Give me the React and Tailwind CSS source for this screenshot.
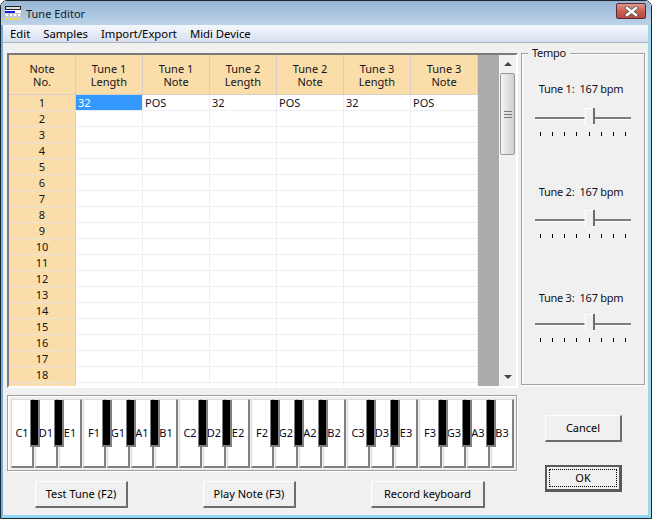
const F = { fontFamily: '"Noto Sans", Tahoma, sans-serif' };
const heads = [["Note","No."],["Tune 1","Length"],["Tune 1","Note"],["Tune 2","Length"],["Tune 2","Note"],["Tune 3","Length"],["Tune 3","Note"]];
const row1 = ["32","POS","32","POS","32","POS"];
const whites = ["C1","D1","E1","F1","G1","A1","B1","C2","D2","E2","F2","G2","A2","B2","C3","D3","E3","F3","G3","A3","B3"];
const hasBlack = [0,1,3,4,5];

function Btn({ children, className = "", def }) {
  if (def) {
    return (
      <div className={"flex items-center justify-center bg-[#f0f0f0] border-2 border-[#5a5a5a] border-r-[3px] border-b-[3px] p-[2px] text-[11px] text-black " + className}>
        <div className="w-full h-full flex items-center justify-center border border-dotted border-black">{children}</div>
      </div>
    );
  }
  return (
    <div className={"flex items-center justify-center bg-[#f0f0f0] border border-t-white border-l-white border-r-2 border-b-2 border-r-[#6e6e6e] border-b-[#6e6e6e] text-[11px] text-black " + className}>
      {children}
    </div>
  );
}

function Tempo({ label, labelClass, sliderClass }) {
  return (
    <div className="flex flex-col items-center">
      <div className={"text-[11px] leading-[14px] tracking-[-0.25px] -ml-[4px] text-[#10101c] " + labelClass}>{label}:&nbsp; 167 bpm</div>
      <div className={"relative w-[96px] h-[3px] bg-[#7c7c7c] border-b border-white " + sliderClass}>
        <svg className="absolute left-[49px] top-[-9px]" width="12" height="22" viewBox="0 0 12 22">
          <path d="M1 .5H10V16L5.5 21 1 16Z" fill="#f0f0f0" stroke="#fff" />
          <rect x="9" y="0" width="2" height="16" fill="#6e6e6e" />
        </svg>
      </div>
      <div className="flex justify-between w-[87px] mt-[12px]">
        {Array.from({ length: 8 }).map((_, i) => <div key={i} className="w-px h-[4px] bg-black" />)}
      </div>
    </div>
  );
}

export default function App() {
  return (
    <div style={F} className="w-[652px] h-[519px] bg-[#f0f0f0] flex flex-col border border-[#1c262c] rounded-t-[7px] overflow-hidden text-black box-border">
      <div className="flex-1 min-h-0 flex flex-col border-l-2 border-r-[3px] border-b-[3px] border-l-[#6fb0e0] border-r-[#9fd6ec] border-b-[#8fd4f0] bg-[#f0f0f0]">
        <div className="h-[24px] -ml-[2px] -mr-[3px] shrink-0 flex items-center justify-between pl-[4px] pr-[5px] bg-gradient-to-b from-[#97b5d4] via-[#a9c4de] to-[#bcd3e8]">
          <div className="flex items-center gap-[5px]">
            <svg width="16" height="16" viewBox="0 0 16 16">
              <rect x="0.5" y="1.5" width="15" height="3" fill="#dcdcdc" stroke="#222" />
              <rect x="0" y="5" width="16" height="3" fill="#fff" />
              <rect x="0" y="6" width="10" height="2" fill="#1a1ae0" />
              <rect x="0" y="8" width="16" height="8" fill="#c8ccd0" />
              <path d="M1 9h2v2H1zM5 9h2v2H5zM9 9h2v2H9zM13 9h2v2h-2z" fill="#fff" />
              <path d="M1 13h2v2H1zM5 13h2v2H5zM9 13h2v2H9zM13 13h2v2h-2z" fill="#f5e61e" />
            </svg>
            <span className="text-[11px] leading-none mt-[1px] text-[#10202a]">Tune Editor</span>
          </div>
          <div className="w-[30px] h-[16px] -mt-[4px] rounded-[2px] border border-[#5a2a3a] bg-gradient-to-b from-[#dc9a90] via-[#c9604f] to-[#b8483a] flex items-center justify-center">
            <svg width="15" height="11" viewBox="0 0 15 11">
              <path d="M3 2l9 7M12 2l-9 7" stroke="#555" strokeWidth="4" strokeLinecap="square" />
              <path d="M3 2l9 7M12 2l-9 7" stroke="#fff" strokeWidth="2.4" strokeLinecap="square" />
            </svg>
          </div>
        </div>
        <div className="h-[18px] shrink-0 flex items-center pl-[7px] pt-[1px] gap-[13px] text-[11.3px] leading-none bg-gradient-to-b from-[#f4f7fc] to-[#d9dff0] border-b border-b-[#b0b4c0]">
          <span>Edit</span><span>Samples</span><span>Import/Export</span><span>Midi Device</span>
        </div>
        <div className="flex mt-[10px] ml-[4px] h-[335px] shrink-0">
          <div className="w-[511px] h-[335px] shrink-0 border-2 border-t-[#7a7a7a] border-l-[#7a7a7a] border-r-white border-b-white flex overflow-hidden">
            <div className="w-[469px] shrink-0 overflow-hidden bg-white">
              <div className="flex h-[40px]">
                {heads.map((h, i) => (
                  <div key={i} className="w-[67px] shrink-0 bg-[#fadda8] border-r border-b border-r-[#d4d0c8] border-b-[#d4d0c8] flex flex-col items-center justify-center text-[11px] leading-[13px] text-[#14141c]">
                    <span>{h[0]}</span><span>{h[1]}</span>
                  </div>
                ))}
              </div>
              {Array.from({ length: 19 }).map((_, r) => (
                <div key={r} className="flex h-[16px] text-[11px] leading-[15px]">
                  <div className="w-[67px] shrink-0 bg-[#fadda8] border-r border-b border-r-[#d4d0c8] border-b-[#e8e4dc] text-center text-[#14141c]">{r < 18 ? r + 1 : ""}</div>
                  {Array.from({ length: 6 }).map((_, c) => (
                    <div key={c} className={"w-[67px] shrink-0 pl-[2px] border-r border-b border-[#eeeeee] " + (r === 0 && c === 0 ? "bg-[#3399ff] text-white" : "bg-white text-[#14141c]")}>
                      {r === 0 ? row1[c] : ""}
                    </div>
                  ))}
                </div>
              ))}
            </div>
            <div className="w-[21px] shrink-0 bg-[#ababab]" />
            <div className="w-[17px] shrink-0 bg-[#f1f1f1] border-l border-l-[#f8f8f8] flex flex-col items-center relative">
              <span className="mt-[7px] w-0 h-0 border-x-[4px] border-x-transparent border-b-[4px] border-b-[#444]" />
              <div className="absolute left-0 top-[18px] w-[15px] h-[82px] rounded-[2px] border border-[#9a9a9a] bg-gradient-to-r from-[#f4f4f4] to-[#cfcfcf] flex items-center justify-center">
                <div className="w-[8px] h-[7px] border-y border-[#777] relative"><div className="absolute left-0 right-0 top-[2px] h-px bg-[#777]" /></div>
              </div>
              <span className="absolute bottom-[7px] w-0 h-0 border-x-[4px] border-x-transparent border-t-[4px] border-t-[#444]" />
            </div>
          </div>
          <div className="relative ml-[3px] w-[124px] h-[332px] border border-[#a0a0a0] shadow-[inset_1px_1px_0_#fff,1px_1px_0_#fff]">
            <span className="absolute left-[6px] -top-[8px] px-[4px] bg-[#f0f0f0] text-[11px] leading-[14px] tracking-[-0.3px] text-[#10101c]">Tempo</span>
            <Tempo label="Tune 1" labelClass="mt-[28px]" sliderClass="mt-[21px]" />
            <Tempo label="Tune 2" labelClass="mt-[49px]" sliderClass="mt-[20px]" />
            <Tempo label="Tune 3" labelClass="mt-[53px]" sliderClass="mt-[18px]" />
          </div>
        </div>
        <div className="flex ml-[4px] mt-[7px]">
          <div className="flex flex-col shrink-0">
            <div className="w-[510px] h-[76px] border border-[#a0a0a0] shadow-[inset_1px_1px_0_#fff,1px_1px_0_#fff] flex pl-[3px] pt-[3px] text-[11px] text-[#08081c]">
              {whites.map((w, i) => (
                <div key={w} className="relative w-[23px] h-[69px] mr-[1px] shrink-0 bg-white border-r-2 border-b-2 border-r-[#808080] border-b-[#808080] border-l border-t border-l-[#dcdcdc] border-t-[#dcdcdc] flex items-center justify-center">
                  <span>{w}</span>
                  {hasBlack.includes(i % 7) && (
                    <div className="absolute left-[18px] top-0 w-[10px] h-[47px] bg-black border-r-2 border-b-2 border-l border-[#808080] z-10" />
                  )}
                </div>
              ))}
            </div>
            <div className="flex mt-[10px] ml-[28px] h-[27px]">
              <Btn className="w-[93px]">Test Tune (F2)</Btn>
              <Btn className="w-[93px] ml-[75px]">Play Note (F3)</Btn>
              <Btn className="w-[114px] ml-[75px]">Record keyboard</Btn>
            </div>
          </div>
          <div className="flex flex-col ml-[28px] mt-[20px]">
            <Btn className="w-[77px] h-[27px]">Cancel</Btn>
            <Btn def className="w-[77px] h-[27px] mt-[23px]">OK</Btn>
          </div>
        </div>
      </div>
    </div>
  );
}
